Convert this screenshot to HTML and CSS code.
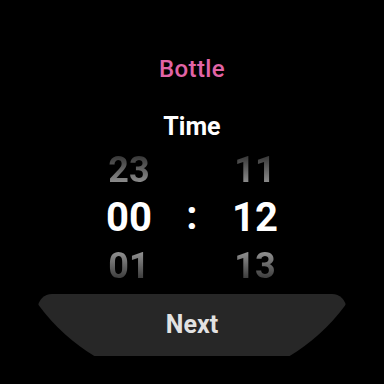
FILE: index.html
```html
<!DOCTYPE html>
<html>
<head>
<meta charset="utf-8">
<link rel="stylesheet" href="styles.css">
</head>
<body>
<div class="screen">
  <div class="title">Bottle</div>
  <div class="label">Time</div>
  <div class="picker">
    <div class="col">
      <div class="num faded-top">23</div>
      <div class="num current">00</div>
      <div class="num faded-bottom">01</div>
    </div>
    <div class="sep">:</div>
    <div class="col">
      <div class="num faded-top">11</div>
      <div class="num current">12</div>
      <div class="num faded-bottom">13</div>
    </div>
  </div>
  <div class="button">Next</div>
</div>
</body>
</html>
```
FILE: styles.css
```css
html, body {
  margin: 0;
  padding: 0;
  background: #000;
}
.screen {
  width: 384px;
  height: 384px;
  background: #000;
  clip-path: circle(190px at 192px 193px);
  display: flex;
  flex-direction: column;
  align-items: center;
  font-family: Roboto, "Noto Sans", sans-serif;
  padding-top: 57px;
  box-sizing: border-box;
}
.title {
  font-size: 24px;
  line-height: 24px;
  font-weight: 500;
  color: #e264a6;
  letter-spacing: 0.4px;
}
.label {
  margin-top: 33px;
  font-size: 25px;
  line-height: 25px;
  font-weight: 700;
  color: #fff;
}
.picker {
  margin-top: 7px;
  display: grid;
  grid-template-columns: 90px 36px 90px;
  align-items: center;
}
.col {
  display: flex;
  flex-direction: column;
  align-items: center;
}
.num {
  height: 48px;
  line-height: 48px;
  font-size: 36px;
  font-weight: 700;
}
.num.current {
  font-size: 40px;
  color: #fff;
}
.faded-top {
  background: linear-gradient(to bottom, #2e2e2e 15%, #9a9a9a 85%);
  -webkit-background-clip: text;
  background-clip: text;
  color: transparent;
}
.faded-bottom {
  background: linear-gradient(to bottom, #9a9a9a 15%, #2e2e2e 85%);
  -webkit-background-clip: text;
  background-clip: text;
  color: transparent;
}
.sep {
  text-align: center;
  font-size: 40px;
  font-weight: 700;
  color: #fff;
  line-height: 48px;
  margin-top: -4px;
}
.button {
  margin-top: 4px;
  width: 308px;
  height: 62px;
  background: #272727;
  border-radius: 14px 14px 0 0;
  display: flex;
  justify-content: center;
  align-items: center;
  font-size: 25px;
  font-weight: 700;
  color: #e2e2e2;
  padding-bottom: 2px;
  box-sizing: border-box;
}
```
